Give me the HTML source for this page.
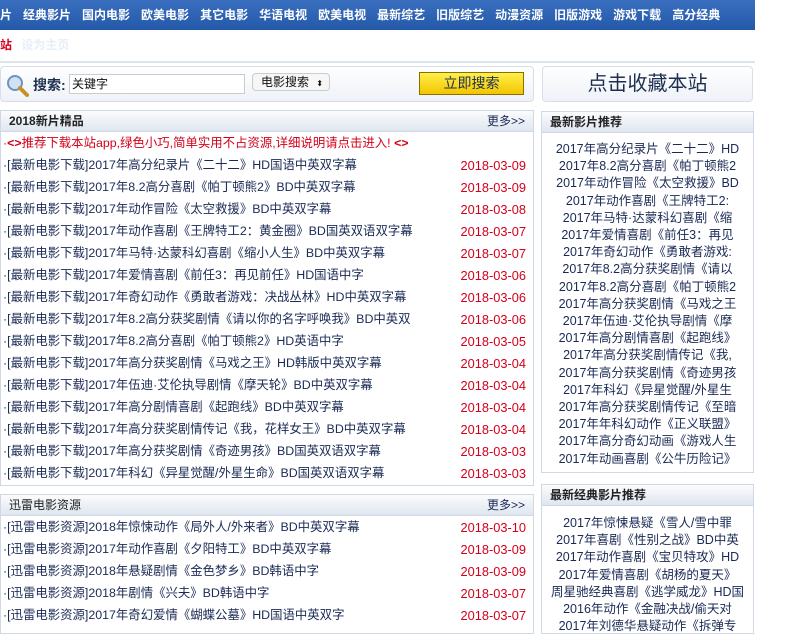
<!DOCTYPE html>
<html><head><meta charset="utf-8"><style>
*{margin:0;padding:0;box-sizing:border-box}
body{width:808px;height:624px;overflow:hidden;background:#fff;font-family:"Liberation Sans","Noto Sans CJK SC",sans-serif;font-size:12px;color:#1a2a55;position:relative}
.nav{position:absolute;left:0;top:0;width:755px;height:30px;background:linear-gradient(#3a6fc0,#2458a8);color:#fff;font-weight:bold;font-size:12px;line-height:30px;white-space:nowrap}
.nav span{margin-right:11px}
.sub{position:absolute;left:0;top:30px;height:30px;line-height:30px;font-size:12px;font-weight:bold}
.hr{position:absolute;left:0;top:61px;width:755px;height:2px;background:#dde4ee}
.search{position:absolute;left:0;top:66px;width:534px;height:36px;border:1px solid #d8dfe8;border-radius:4px;background:linear-gradient(#fff,#eef2f7)}
.fav{position:absolute;left:542px;top:66px;width:211px;height:36px;border:1px solid #d8dfe8;border-radius:4px;background:linear-gradient(#fff,#eef2f7);text-align:center;line-height:34px;font-size:20px;color:#1e3050}
.box{position:absolute;border:1px solid #cfd8e4;background:#fff}
.hd{height:21px;background:linear-gradient(#fbfcfd,#dfe6ef);border-bottom:1px solid #cfd8e4;line-height:20px;padding-left:8px;font-weight:bold;font-size:12px;color:#222}
.hd i{float:right;font-style:normal;font-weight:normal;margin-right:8px;color:#1a2a55}
.row{height:22px;line-height:23px;padding-left:2px;position:relative;font-size:12.4px;white-space:nowrap;overflow:hidden}
.row b{position:absolute;right:7px;top:0;font-weight:normal;color:#d4001a;font-size:12.8px}
.r{text-align:center;font-size:12.5px;line-height:17.2px;white-space:nowrap;overflow:hidden}
</style></head><body>
<div class="nav"><span>片</span><span>经典影片</span><span>国内电影</span><span>欧美电影</span><span>其它电影</span><span>华语电视</span><span>欧美电视</span><span>最新综艺</span><span>旧版综艺</span><span>动漫资源</span><span>旧版游戏</span><span>游戏下载</span><span>高分经典</span></div>
<div class="sub"><span style="color:#d4001a">站</span> <span style="color:#e8eef8;margin-left:6px">设为主页</span></div>
<div class="hr"></div>
<div class="search">
<svg style="position:absolute;left:4px;top:6px" width="24" height="24"><circle cx="10" cy="10" r="7" fill="#cfe2f5" stroke="#6f93bd" stroke-width="2"/><path d="M15 15 L22 22" stroke="#c8902a" stroke-width="4" stroke-linecap="round"/></svg>
<span style="position:absolute;left:32px;top:8px;font-size:14px;font-weight:bold;color:#1e3050">搜索:</span>
<div style="position:absolute;left:68px;top:7px;width:176px;height:20px;border:1px solid #ccc;background:#fff;font-size:12px;line-height:18px;padding-left:2px;color:#111">关键字</div>
<div style="position:absolute;left:251px;top:6px;width:78px;height:18px;border:1px solid #ccc;border-radius:4px;background:#f6f6f6;font-size:12px;line-height:16px;padding-left:8px;color:#111">电影搜索 <span style="font-size:8px;margin-left:4px">⬍</span></div>
<div style="position:absolute;left:418px;top:5px;width:105px;height:23px;border:1px solid #8a7000;background:linear-gradient(#fff04a,#f3c400);text-align:center;line-height:21px;font-size:14px;color:#1e3050">立即搜索</div>
</div>
<div class="fav">点击收藏本站</div>

<div class="box" style="left:0;top:110px;width:534px;height:376px">
<div class="hd">2018新片精品<i>更多&gt;&gt;</i></div>
<div class="row" style="color:#d4001a">·<span style="font-weight:bold">&lt;&gt;</span>推荐下载本站app,绿色小巧,简单实用不占资源,详细说明请点击进入! <span style="font-weight:bold">&lt;&gt;</span></div>
<div class="row">·[最新电影下载]2017年高分纪录片《二十二》HD国语中英双字幕<b>2018-03-09</b></div>
<div class="row">·[最新电影下载]2017年8.2高分喜剧《帕丁顿熊2》BD中英双字幕<b>2018-03-09</b></div>
<div class="row">·[最新电影下载]2017年动作冒险《太空救援》BD中英双字幕<b>2018-03-08</b></div>
<div class="row">·[最新电影下载]2017年动作喜剧《王牌特工2：黄金圈》BD国英双语双字幕<b>2018-03-07</b></div>
<div class="row">·[最新电影下载]2017年马特·达蒙科幻喜剧《缩小人生》BD中英双字幕<b>2018-03-07</b></div>
<div class="row">·[最新电影下载]2017年爱情喜剧《前任3：再见前任》HD国语中字<b>2018-03-06</b></div>
<div class="row">·[最新电影下载]2017年奇幻动作《勇敢者游戏：决战丛林》HD中英双字幕<b>2018-03-06</b></div>
<div class="row">·[最新电影下载]2017年8.2高分获奖剧情《请以你的名字呼唤我》BD中英双<b>2018-03-06</b></div>
<div class="row">·[最新电影下载]2017年8.2高分喜剧《帕丁顿熊2》HD英语中字<b>2018-03-05</b></div>
<div class="row">·[最新电影下载]2017年高分获奖剧情《马戏之王》HD韩版中英双字幕<b>2018-03-04</b></div>
<div class="row">·[最新电影下载]2017年伍迪·艾伦执导剧情《摩天轮》BD中英双字幕<b>2018-03-04</b></div>
<div class="row">·[最新电影下载]2017年高分剧情喜剧《起跑线》BD中英双字幕<b>2018-03-04</b></div>
<div class="row">·[最新电影下载]2017年高分获奖剧情传记《我，花样女王》BD中英双字幕<b>2018-03-04</b></div>
<div class="row">·[最新电影下载]2017年高分获奖剧情《奇迹男孩》BD国英双语双字幕<b>2018-03-03</b></div>
<div class="row">·[最新电影下载]2017年科幻《异星觉醒/外星生命》BD国英双语双字幕<b>2018-03-03</b></div>
</div>

<div class="box" style="left:0;top:494px;width:534px;height:140px">
<div class="hd" style="font-weight:normal">迅雷电影资源<i>更多&gt;&gt;</i></div>
<div class="row">·[迅雷电影资源]2018年惊悚动作《局外人/外来者》BD中英双字幕<b>2018-03-10</b></div>
<div class="row">·[迅雷电影资源]2017年动作喜剧《夕阳特工》BD中英双字幕<b>2018-03-09</b></div>
<div class="row">·[迅雷电影资源]2018年悬疑剧情《金色梦乡》BD韩语中字<b>2018-03-09</b></div>
<div class="row">·[迅雷电影资源]2018年剧情《兴夫》BD韩语中字<b>2018-03-07</b></div>
<div class="row">·[迅雷电影资源]2017年奇幻爱情《蝴蝶公墓》HD国语中英双字<b>2018-03-07</b></div>
</div>

<div class="box" style="left:541px;top:111px;width:213px;height:362px">
<div class="hd" style="padding-left:8px">最新影片推荐</div>
<div style="padding-top:8px">
<div class="r">2017年高分纪录片《二十二》HD</div>
<div class="r">2017年8.2高分喜剧《帕丁顿熊2</div>
<div class="r">2017年动作冒险《太空救援》BD</div>
<div class="r">2017年动作喜剧《王牌特工2:</div>
<div class="r">2017年马特·达蒙科幻喜剧《缩</div>
<div class="r">2017年爱情喜剧《前任3：再见</div>
<div class="r">2017年奇幻动作《勇敢者游戏:</div>
<div class="r">2017年8.2高分获奖剧情《请以</div>
<div class="r">2017年8.2高分喜剧《帕丁顿熊2</div>
<div class="r">2017年高分获奖剧情《马戏之王</div>
<div class="r">2017年伍迪·艾伦执导剧情《摩</div>
<div class="r">2017年高分剧情喜剧《起跑线》</div>
<div class="r">2017年高分获奖剧情传记《我,</div>
<div class="r">2017年高分获奖剧情《奇迹男孩</div>
<div class="r">2017年科幻《异星觉醒/外星生</div>
<div class="r">2017年高分获奖剧情传记《至暗</div>
<div class="r">2017年年科幻动作《正义联盟》</div>
<div class="r">2017年高分奇幻动画《游戏人生</div>
<div class="r">2017年动画喜剧《公牛历险记》</div>
</div></div>

<div class="box" style="left:541px;top:484px;width:213px;height:150px">
<div class="hd">最新经典影片推荐</div>
<div style="padding-top:9px">
<div class="r">2017年惊悚悬疑《雪人/雪中罪</div>
<div class="r">2017年喜剧《性别之战》BD中英</div>
<div class="r">2017年动作喜剧《宝贝特攻》HD</div>
<div class="r">2017年爱情喜剧《胡杨的夏天》</div>
<div class="r">周星驰经典喜剧《逃学威龙》HD国</div>
<div class="r">2016年动作《金融决战/偷天对</div>
<div class="r">2017年刘德华悬疑动作《拆弹专</div>
</div></div>
</body></html>
